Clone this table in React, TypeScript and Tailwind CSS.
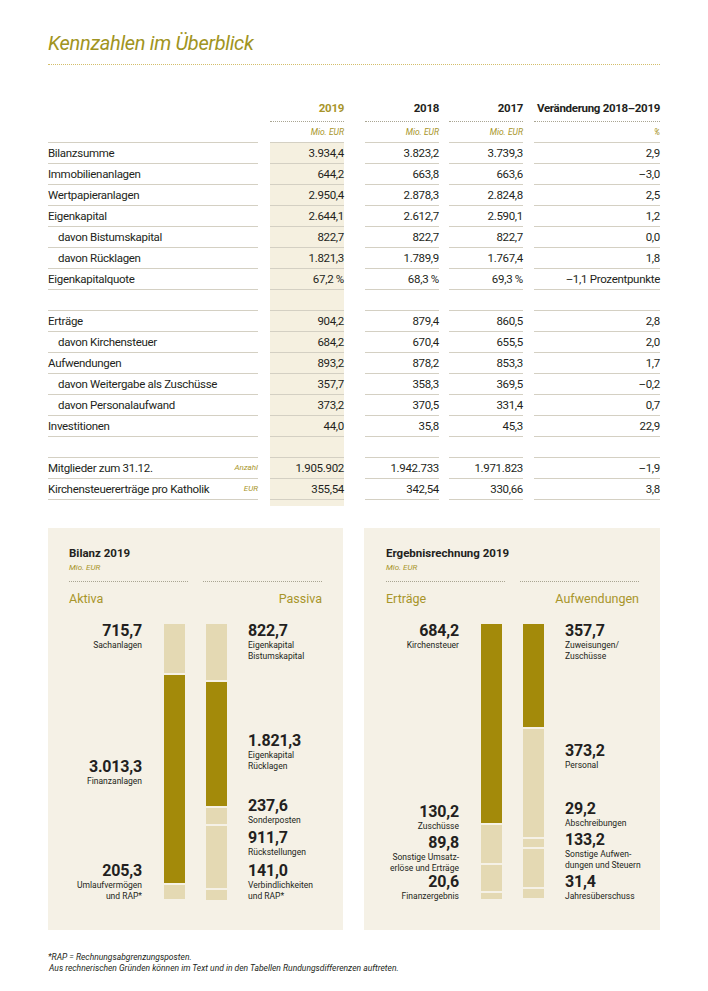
import React from "react";

// Table data
interface Row {
  label?: string;
  indent?: boolean;
  unit?: string;
  values?: string[];
}

const rows: Row[] = [
  { label: "Bilanzsumme", values: ["3.934,4", "3.823,2", "3.739,3", "2,9"] },
  { label: "Immobilienanlagen", values: ["644,2", "663,8", "663,6", "–3,0"] },
  { label: "Wertpapieranlagen", values: ["2.950,4", "2.878,3", "2.824,8", "2,5"] },
  { label: "Eigenkapital", values: ["2.644,1", "2.612,7", "2.590,1", "1,2"] },
  { label: "davon Bistumskapital", indent: true, values: ["822,7", "822,7", "822,7", "0,0"] },
  { label: "davon Rücklagen", indent: true, values: ["1.821,3", "1.789,9", "1.767,4", "1,8"] },
  { label: "Eigenkapitalquote", values: ["67,2 %", "68,3 %", "69,3 %", "–1,1 Prozentpunkte"] },
  {},
  { label: "Erträge", values: ["904,2", "879,4", "860,5", "2,8"] },
  { label: "davon Kirchensteuer", indent: true, values: ["684,2", "670,4", "655,5", "2,0"] },
  { label: "Aufwendungen", values: ["893,2", "878,2", "853,3", "1,7"] },
  { label: "davon Weitergabe als Zuschüsse", indent: true, values: ["357,7", "358,3", "369,5", "–0,2"] },
  { label: "davon Personalaufwand", indent: true, values: ["373,2", "370,5", "331,4", "0,7"] },
  { label: "Investitionen", values: ["44,0", "35,8", "45,3", "22,9"] },
  {},
  { label: "Mitglieder zum 31.12.", unit: "Anzahl", values: ["1.905.902", "1.942.733", "1.971.823", "–1,9"] },
  { label: "Kirchensteuererträge pro Katholik", unit: "EUR", values: ["355,54", "342,54", "330,66", "3,8"] },
];

// Chart data
interface Segment {
  value: number;
  dark?: boolean;
}

interface ChartLabel {
  top: number;
  value: string;
  lines: string[];
}

interface ChartSide {
  segments: Segment[];
  labels: ChartLabel[];
}

const BAR_HEIGHT = 275;
const GAP = 2;

function Bar({ segments }: { segments: Segment[] }) {
  const total = segments.reduce((acc, s) => acc + s.value, 0);
  const scale = (BAR_HEIGHT - GAP * (segments.length - 1)) / total;
  return (
    <div className="flex w-[21px] flex-col gap-[2px]">
      {segments.map((s, i) => (
        <div
          key={i}
          className={s.dark ? "bg-[#a38a0a]" : "bg-[#e4d9b3]"}
          style={{ height: Math.round(s.value * scale) }}
        />
      ))}
    </div>
  );
}

function Labels({ labels, align }: { labels: ChartLabel[]; align: "left" | "right" }) {
  return (
    <>
      {labels.map((l, i) => (
        <div
          key={i}
          className={`absolute ${align === "right" ? "right-0 text-right" : "left-0 text-left"}`}
          style={{ top: l.top }}
        >
          <div className="text-[16px] font-bold leading-[16px] tracking-[-0.2px] text-[#231f20]">{l.value}</div>
          <div className="mt-[1px] whitespace-nowrap text-[8.5px] leading-[11px] text-[#231f20]">
            {l.lines.map((line) => (
              <div key={line}>{line}</div>
            ))}
          </div>
        </div>
      ))}
    </>
  );
}

function ChartPanel({
  title,
  leftTitle,
  rightTitle,
  left,
  right,
  className,
}: {
  title: string;
  leftTitle: string;
  rightTitle: string;
  left: ChartSide;
  right: ChartSide;
  className?: string;
}) {
  return (
    <div className={`h-[402px] bg-[#f5f1e6] pt-[18px] ${className ?? ""}`}>
      <div className="text-[11.5px] font-bold leading-[14px] text-[#231f20]">{title}</div>
      <div className="mt-[3px] text-[8px] italic leading-[10px] text-[#a8952a]">Mio. EUR</div>
      <div className="mt-[8px] flex justify-between">
        <div className="w-[119px] border-t border-dotted border-[#a9a592]" />
        <div className="w-[119px] border-t border-dotted border-[#a9a592]" />
      </div>
      <div className="mt-[9px] flex justify-between text-[12.5px] leading-[16px] text-[#a8952a]">
        <span>{leftTitle}</span>
        <span>{rightTitle}</span>
      </div>
      <div className="mt-[17px] flex h-[280px]">
        <div className="relative w-[73px]">
          <Labels labels={left.labels} align="right" />
        </div>
        <div className="ml-[22px]">
          <Bar segments={left.segments} />
        </div>
        <div className="ml-[21px]">
          <Bar segments={right.segments} />
        </div>
        <div className="relative ml-[21px] flex-1">
          <Labels labels={right.labels} align="left" />
        </div>
      </div>
    </div>
  );
}

const aktiva: ChartSide = {
  segments: [{ value: 715.7 }, { value: 3013.3, dark: true }, { value: 205.3 }],
  labels: [
    { top: -1, value: "715,7", lines: ["Sachanlagen"] },
    { top: 135, value: "3.013,3", lines: ["Finanzanlagen"] },
    { top: 239, value: "205,3", lines: ["Umlaufvermögen", "und RAP*"] },
  ],
};

const passiva: ChartSide = {
  segments: [
    { value: 822.7 },
    { value: 1821.3, dark: true },
    { value: 237.6 },
    { value: 911.7 },
    { value: 141.0 },
  ],
  labels: [
    { top: -1, value: "822,7", lines: ["Eigenkapital", "Bistumskapital"] },
    { top: 109, value: "1.821,3", lines: ["Eigenkapital", "Rücklagen"] },
    { top: 174, value: "237,6", lines: ["Sonderposten"] },
    { top: 206, value: "911,7", lines: ["Rückstellungen"] },
    { top: 239, value: "141,0", lines: ["Verbindlichkeiten", "und RAP*"] },
  ],
};

const ertraege: ChartSide = {
  segments: [{ value: 684.2, dark: true }, { value: 130.2 }, { value: 89.8 }, { value: 20.6 }],
  labels: [
    { top: -1, value: "684,2", lines: ["Kirchensteuer"] },
    { top: 180, value: "130,2", lines: ["Zuschüsse"] },
    { top: 211, value: "89,8", lines: ["Sonstige Umsatz-", "erlöse und Erträge"] },
    { top: 250, value: "20,6", lines: ["Finanzergebnis"] },
  ],
};

const aufwendungen: ChartSide = {
  segments: [
    { value: 357.7, dark: true },
    { value: 373.2 },
    { value: 29.2 },
    { value: 133.2 },
    { value: 31.4 },
  ],
  labels: [
    { top: -1, value: "357,7", lines: ["Zuweisungen/", "Zuschüsse"] },
    { top: 119, value: "373,2", lines: ["Personal"] },
    { top: 177, value: "29,2", lines: ["Abschreibungen"] },
    { top: 208, value: "133,2", lines: ["Sonstige Aufwen-", "dungen und Steuern"] },
    { top: 250, value: "31,4", lines: ["Jahresüberschuss"] },
  ],
};

export default function App() {
  const line = "border-b border-[#d4d0c3]";
  return (
    <div className="min-h-[991px] w-[708px] bg-white px-[48px] font-['Roboto',sans-serif] text-[#231f20]">
      {/* Title */}
      <h1 className="pt-[31px] text-[20px] italic leading-[24px] tracking-[-0.3px] text-[#9f9422]">Kennzahlen im Überblick</h1>
      <div className="mt-[9px] border-b border-dotted border-[#d3be6a]" />

      {/* Table */}
      <div className="mt-[34px] text-[11.5px] tracking-[-0.3px]">
        <div className="flex h-[23px] whitespace-nowrap font-bold leading-[18px]">
          <div className="w-[210px]" />
          <div className="ml-[12px] w-[74px] border-b border-dotted border-[#a9a592] text-right text-[#a8952a]">2019</div>
          <div className="ml-[21px] w-[74px] border-b border-dotted border-[#a9a592] text-right">2018</div>
          <div className="ml-[10px] w-[74px] border-b border-dotted border-[#a9a592] text-right">2017</div>
          <div className="ml-[11px] w-[126px] border-b border-dotted border-[#a9a592] text-right">Veränderung 2018–2019</div>
        </div>
        <div className="flex h-[21px] text-[8.5px] italic leading-[20px] tracking-normal text-[#a8952a]">
          <div className={`w-[210px] ${line}`} />
          <div className={`ml-[12px] w-[74px] text-right ${line}`}>Mio. EUR</div>
          <div className={`ml-[21px] w-[74px] text-right ${line}`}>Mio. EUR</div>
          <div className={`ml-[10px] w-[74px] text-right ${line}`}>Mio. EUR</div>
          <div className={`ml-[11px] w-[126px] text-right ${line}`}>%</div>
        </div>
        {rows.map((row, i) => (
          <div key={i} className="flex h-[21px] leading-[20px]">
            <div className={`flex w-[210px] justify-between whitespace-nowrap ${line} ${row.indent ? "pl-[10px]" : ""}`}>
              <span>{row.label}</span>
              {row.unit && <span className="text-[8px] italic tracking-normal text-[#a8952a]">{row.unit}</span>}
            </div>
            <div className={`ml-[12px] w-[74px] bg-[#f5f0e0] text-right ${line}`}>{row.values?.[0]}</div>
            <div className={`ml-[21px] w-[74px] text-right ${line}`}>{row.values?.[1]}</div>
            <div className={`ml-[10px] w-[74px] text-right ${line}`}>{row.values?.[2]}</div>
            <div className={`ml-[11px] w-[126px] whitespace-nowrap text-right ${line}`}>{row.values?.[3]}</div>
          </div>
        ))}
        <div className="flex h-[6px]">
          <div className="ml-[222px] w-[74px] bg-[#f5f0e0]" />
        </div>
      </div>

      {/* Charts */}
      <div className="mt-[22px] flex gap-[21px]">
        <ChartPanel
          className="w-[295px] px-[21px]"
          title="Bilanz 2019"
          leftTitle="Aktiva"
          rightTitle="Passiva"
          left={aktiva}
          right={passiva}
        />
        <ChartPanel
          className="w-[296px] pl-[22px] pr-[21px]"
          title="Ergebnisrechnung 2019"
          leftTitle="Erträge"
          rightTitle="Aufwendungen"
          left={ertraege}
          right={aufwendungen}
        />
      </div>

      {/* Footnote */}
      <div className="mt-[22px] text-[8.5px] italic leading-[11px]">
        <div>*RAP = Rechnungsabgrenzungsposten.</div>
        <div className="pl-[1px]">Aus rechnerischen Gründen können im Text und in den Tabellen Rundungsdifferenzen auftreten.</div>
      </div>
    </div>
  );
}
